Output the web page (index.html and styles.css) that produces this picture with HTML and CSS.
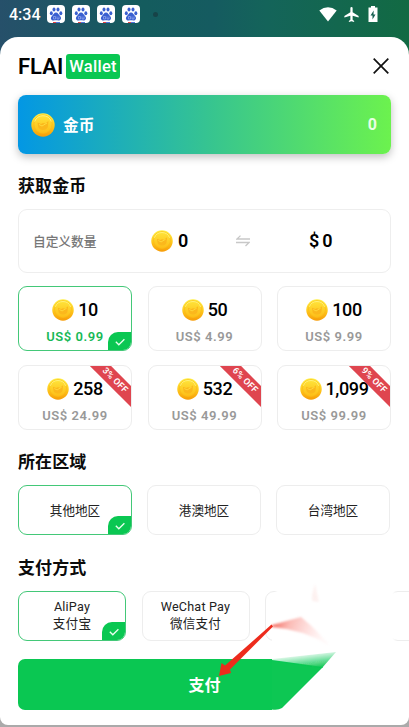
FILE: index.html
```html
<!DOCTYPE html>
<html lang="zh-CN">
<head>
<meta charset="utf-8">
<meta name="viewport" content="width=device-width, initial-scale=1">
<title>FLAI Wallet</title>
<link rel="stylesheet" href="styles.css">
</head>
<body>
<svg class="defs" width="0" height="0">
  <defs>
    <linearGradient id="rim" x1="0" y1="0" x2="0" y2="1"><stop offset="0" stop-color="#fff04a"/><stop offset=".5" stop-color="#ffcb1e"/><stop offset="1" stop-color="#f79c08"/></linearGradient>
    <linearGradient id="face" x1="0" y1="0" x2="0" y2="1"><stop offset="0" stop-color="#ffe43a"/><stop offset="1" stop-color="#fdbd18"/></linearGradient>
    <symbol id="coin" viewBox="0 0 24 24">
      <circle cx="12" cy="12" r="11.7" fill="url(#rim)"/>
      <circle cx="12" cy="11" r="9.200" fill="url(#face)" stroke="#fbb916" stroke-width=".7"/>
      <path d="M3.600 8.500a9 9 0 0 1 16.800 0" fill="none" stroke="#fff47e" stroke-width="1"/>
      <path d="M6.500 9.500l3.500 1.500 2-1 2 .5 3.500-2.500-.5 5a5 4 0 0 1-10 0z" fill="#fbb81c"/>
      <path d="M8 11.500l3 1.500 5-3" fill="none" stroke="#ffda3c" stroke-width="1"/>
    </symbol>
    <symbol id="paw" viewBox="0 0 18 18">
      <rect width="18" height="18" rx="4" fill="#fff"/>
      <g fill="#3a5fd0"><ellipse cx="4.300" cy="8.200" rx="1.500" ry="2"/><ellipse cx="7" cy="4.600" rx="1.500" ry="2"/><ellipse cx="11" cy="4.600" rx="1.500" ry="2"/><ellipse cx="13.800" cy="8.200" rx="1.500" ry="2"/><path d="M9 7.600c2 0 2.500 2 4 3.400 2 2 .8 4.600-1.500 4.500-1.800-.2-3.200-.2-5 0C4 15.600 3 13 5 11c1.500-1.400 2-3.400 4-3.400z"/></g>
      <path d="M6.500 11.500h2v2.500h-2zM10 11.500v2.500h2v-2.500" fill="none" stroke="#a9b9f5" stroke-width=".6"/>
      <path d="M6 17h3v1H6z" fill="#e23f45"/><path d="M9 17h4v1H9z" fill="#5275dd"/>
    </symbol>
    <symbol id="check" viewBox="0 0 12 12"><path d="M1.800 5.800l3 3 5.600-5.600" fill="none" stroke="#e8ffee" stroke-width="1.300"/></symbol>
  </defs>
</svg>

<div class="status">
  <span class="time">4:34</span>
  <span class="apps">
    <svg><use href="#paw"/></svg><svg><use href="#paw"/></svg><svg><use href="#paw"/></svg><svg><use href="#paw"/></svg>
  </span>
  <i class="dot"></i>
  <svg class="wifi" viewBox="0 0 18 15"><path d="M.3 3.400Q9-3 17.700 3.400L9 14.500z" fill="#fff"/></svg>
  <svg class="plane" viewBox="2 2 19 20"><path d="M21 16v-2l-8-5V3.500a1.500 1.500 0 0 0-3 0V9l-8 5v2l8-2.500V19l-2 1.500V22l3.500-1 3.500 1v-1.500L13 19v-5.500z" fill="#fff"/></svg>
  <svg class="battery" viewBox="0 0 10 16"><path d="M3 0h4v1.500h2.500V16h-9V1.500H3z" fill="#fff"/><path d="M5.700 4.500L2.500 9.500h2v4l3-5h-2z" fill="#155f50"/></svg>
</div>

<main class="sheet">
  <header class="top">
    <div class="brand"><span class="name">FLAI</span><span class="tag">Wallet</span></div>
    <svg class="close" viewBox="0 0 16 16"><path d="M.7.7l14.600 14.600M15.300.7L.7 15.300" stroke="#111" stroke-width="1.700"/></svg>
  </header>

  <section class="balance">
    <svg class="coin-lg"><use href="#coin"/></svg>
    <span>金币</span><b>0</b>
  </section>

  <h2 class="first">获取金币</h2>
  <section class="custom">
    <span class="label">自定义数量</span>
    <span class="amount"><svg class="coin"><use href="#coin"/></svg>0</span>
    <svg class="swap" viewBox="0 0 14 12"><path d="M4.500.6L1 4h13M0 7.500h13L9.500 11" fill="none" stroke="#c8c8c8" stroke-width="1.300"/></svg>
    <span class="usd"><span>$</span><span>0</span></span>
  </section>

  <section class="packs">
    <div class="card on"><div class="qty"><svg class="coin"><use href="#coin"/></svg>10</div><div class="price">US$ 0.99</div><span class="mark"><svg><use href="#check"/></svg></span></div>
    <div class="card"><div class="qty"><svg class="coin"><use href="#coin"/></svg>50</div><div class="price">US$ 4.99</div></div>
    <div class="card"><div class="qty"><svg class="coin"><use href="#coin"/></svg>100</div><div class="price">US$ 9.99</div></div>
    <div class="card"><div class="qty"><svg class="coin"><use href="#coin"/></svg>258</div><div class="price">US$ 24.99</div><span class="off">3% OFF</span></div>
    <div class="card"><div class="qty"><svg class="coin"><use href="#coin"/></svg>532</div><div class="price">US$ 49.99</div><span class="off">6% OFF</span></div>
    <div class="card"><div class="qty"><svg class="coin"><use href="#coin"/></svg>1,099</div><div class="price">US$ 99.99</div><span class="off">9% OFF</span></div>
  </section>

  <h2 class="second">所在区域</h2>
  <section class="regions">
    <div class="card on">其他地区<span class="mark"><svg><use href="#check"/></svg></span></div>
    <div class="card">港澳地区</div>
    <div class="card">台湾地区</div>
  </section>

  <h2 class="third">支付方式</h2>
  <section class="methods">
    <div class="card on"><span>AliPay</span><span>支付宝</span><span class="mark"><svg><use href="#check"/></svg></span></div>
    <div class="card"><span>WeChat Pay</span><span>微信支付</span></div>
    <div class="card"></div>
    <div class="card"></div>
  </section>

  <button class="pay">支付</button>
</main>

<svg class="overlay" width="409" height="727" viewBox="0 0 409 727">
  <defs>
    <filter id="soft" x="-20%" y="-20%" width="140%" height="140%"><feGaussianBlur stdDeviation="1"/></filter>
    <filter id="faint" x="-20%" y="-20%" width="140%" height="140%"><feGaussianBlur stdDeviation=".6"/></filter>
    <linearGradient id="pink" x1="0" y1="0" x2="1" y2=".2"><stop offset="0" stop-color="#ef3b2c" stop-opacity=".85"/><stop offset=".35" stop-color="#f88f86" stop-opacity=".6"/><stop offset="1" stop-color="#fbb" stop-opacity=".1"/></linearGradient>
    <linearGradient id="haze" gradientUnits="userSpaceOnUse" x1="308" y1="653" x2="310" y2="669"><stop offset="0" stop-color="#0ac752" stop-opacity=".05"/><stop offset="1" stop-color="#0ac752"/></linearGradient>
    <clipPath id="right"><path d="M272 570H409V716H272z"/></clipPath>
  </defs>
  <g clip-path="url(#right)">
    <path d="M262 642L276 636V586L316 578L394 586V714H262z" fill="#fff" filter="url(#soft)"/>
    <path d="M260 660H272L323 667L282 708Q278 710.500 272 709.500H260z" fill="#0ac752" filter="url(#faint)"/>
    <path d="M268 659.500L336 652L322 668L268 661z" fill="url(#haze)" filter="url(#faint)"/>
  </g>
  <path d="M272 625L301 617Q317 630 329 645Q301 629 272 627z" fill="url(#pink)" filter="url(#soft)"/>
  <path d="M312 595l3-11 4 18-7-1z" fill="#fbd9d5" opacity=".35" filter="url(#soft)"/>
  <path d="M271.500 624.500L273 626.500L230 669.500L231 673L219 676L221.500 663L225 665.500z" fill="#ed2b1c"/>
</svg>
</body>
</html>
```
FILE: styles.css
```css
* { box-sizing: border-box; }
body {
  margin: 0;
  height: 727px;
  overflow: hidden;
  display: flex;
  flex-direction: column;
  font-family: Roboto, "Noto Sans CJK SC", sans-serif;
  color: #0b0b0b;
  background: linear-gradient(90deg, #26506a 0, #145c5e 35%, #155b60 52%, #14645a 65%, #126a43 100%) top / 100% 80px no-repeat, #aaa;
}
svg { display: block; flex: none; }
.defs { position: absolute; }
.status { height: 37px; flex: none; display: flex; align-items: center; padding: 0 31px 9px 9px; }
.time { width: 38px; color: #fff; font-size: 16px; font-weight: 500; }
.apps { display: flex; gap: 7px; }
.apps svg { width: 18px; height: 18px; }
.dot { width: 5px; height: 5px; margin-left: 13px; border-radius: 50%; background: #174348; }
.wifi { width: 18px; height: 15px; margin-left: auto; }
.plane { width: 15px; height: 15px; margin-left: 7px; }
.battery { width: 10px; height: 16px; margin-left: 9px; }

.sheet { height: 688px; flex: none; padding: 17px 0 0 18px; background: #fff; border-radius: 18px 18px 8px 8px; overflow: hidden; }
.top { height: 25px; display: flex; justify-content: space-between; align-items: center; padding-right: 20px; }
.brand { display: flex; align-items: center; gap: 3px; }
.name { width: 45px; font-size: 22px; font-weight: 600; line-height: 25px; color: #000; }
.tag { width: 54px; height: 25px; border-radius: 3px; background: #0ac752; color: #fff; font-size: 16.500px; font-weight: 500; line-height: 25px; letter-spacing: .3px; text-align: center; }
.close { width: 16px; height: 16px; margin-top: -2px; }

.balance { width: 373px; height: 59px; margin-top: 16px; padding: 0 14px 0 13px; display: flex; align-items: center; border-radius: 8px; color: #fff; background: linear-gradient(90deg, #0397e4, #37c58f 52%, #6cf24e); box-shadow: 0 3px 9px rgba(0, 0, 0, .25); }
.coin-lg { width: 24px; height: 24px; margin-right: 8px; }
.balance span { font-size: 15.700px; font-weight: 700; line-height: 20px; padding-top: 2px; }
.balance b { margin-left: auto; font-size: 16px; color: #e9ffe4; }

h2 { margin: 0; height: 24px; font-size: 17px; font-weight: 700; line-height: 24px; letter-spacing: .1px; }
.first { margin-top: 20px; }
.second { margin-top: 20px; }
.third { margin-top: 21px; }

.custom { width: 373px; height: 64px; margin-top: 11px; border: 1px solid #eee; border-radius: 9px; display: grid; grid-template-columns: 118px 99px 59px 1fr; align-items: center; padding-left: 14px; }
.label { font-size: 12.700px; font-weight: 500; color: #777; padding-bottom: 2px; }
.amount, .usd { display: flex; align-items: center; font-size: 18px; font-weight: 600; color: #000; }
.amount { padding-bottom: 1px; }
.usd { gap: 3px; padding-bottom: 1px; }
.coin { width: 22px; height: 22px; margin-right: 4px; }
.amount .coin { margin-right: 5px; }
.swap { width: 14px; height: 12px; margin-left: -14px; }

.packs, .regions { display: grid; grid-template-columns: repeat(3, 114px); column-gap: 15.500px; }
.packs { margin-top: 13px; grid-auto-rows: 65px; row-gap: 14px; }
.card { position: relative; display: flex; flex-direction: column; align-items: center; justify-content: center; border: 1px solid #ededed; border-radius: 9px; overflow: hidden; }
.card.on { border-color: #43c878; }
.packs .card { justify-content: flex-start; padding-top: 11px; }
.qty { display: flex; align-items: center; height: 24px; font-size: 18px; font-weight: 500; letter-spacing: -.4px; color: #000; }
.packs .qty { padding-bottom: 1px; }
.price { margin-top: 7px; font-size: 13px; line-height: 16px; font-weight: 600; letter-spacing: .55px; color: #999; }
.on .price { color: #18b957; }
.mark { position: absolute; right: -1px; bottom: -1px; width: 24px; height: 19px; display: flex; align-items: center; justify-content: center; background: #0ac752; border-radius: 10px 0 8px; }
.mark svg { width: 12px; height: 12px; }
.off { position: absolute; top: 7px; right: -23px; width: 78px; height: 15px; transform: rotate(45deg); background: #df454f; color: #fff; font-size: 9px; font-weight: 600; line-height: 15px; letter-spacing: .3px; text-align: center; }

.regions { margin-top: 11px; column-gap: 15px; grid-auto-rows: 50px; font-size: 12.600px; color: #222; }
.regions .card { padding-bottom: 2px; }
.methods { display: grid; grid-template-columns: repeat(4, 108px); grid-auto-rows: 50px; column-gap: 15.500px; margin-top: 11px; font-size: 12.600px; line-height: 17px; color: #222; }
.methods .card { letter-spacing: .2px; padding-bottom: 2px; }
.pay { display: block; width: 373px; height: 51px; margin-top: 18px; padding: 1px 0 0; border: 0; border-radius: 7px; background: #0ac752; color: #fff; font: 700 16px/51px Roboto, "Noto Sans CJK SC", sans-serif; }
.overlay { position: absolute; left: 0; top: 0; }
```
